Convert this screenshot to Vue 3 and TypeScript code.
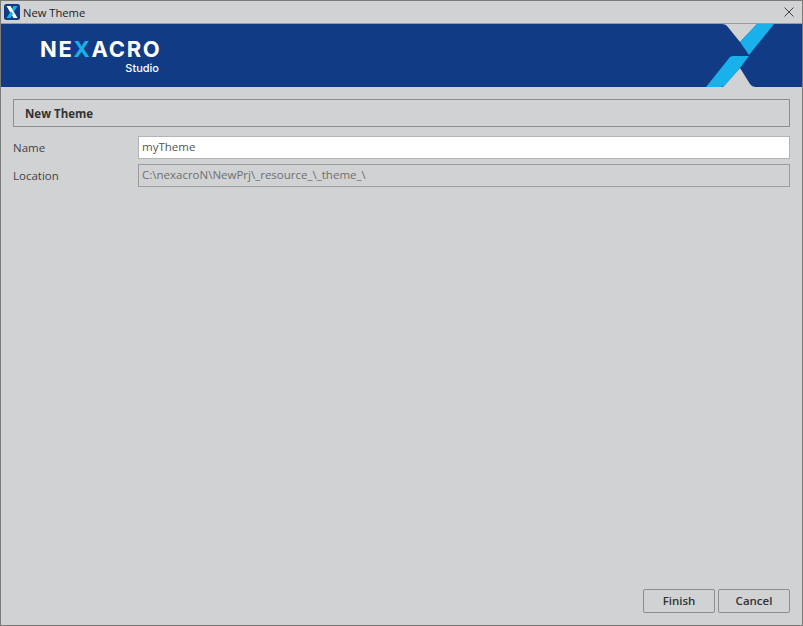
<script setup lang="ts">
const title: string = 'New Theme'
const name: string = 'myTheme'
const location: string = 'C:\\nexacroN\\NewPrj\\_resource_\\_theme_\\'
</script>

<template>
  <div class="window">
    <div class="titlebar">
      <svg class="app-icon" width="16" height="16" viewBox="0 0 16 16">
        <rect width="16" height="16" rx="2.5" fill="#123b85" />
        <path d="M2.500 2h4l7 12h-4z" fill="#fff" />
        <path d="M9.500 2H13.500L10 7.500 8 4.500z" fill="#19b1ec" />
        <path d="M2.500 14h4L9 10 7 7z" fill="#19b1ec" />
      </svg>
      <span class="title">{{ title }}</span>
      <svg class="close" width="10" height="10" viewBox="0 0 10 10">
        <path d="M.5.5l9 9M9.5.5l-9 9" stroke="#444" stroke-width="1" fill="none" />
      </svg>
    </div>
    <div class="banner">
      <div class="logo">
        <div class="wordmark">NE<span class="x">X</span>ACRO</div>
        <div class="studio">Studio</div>
      </div>
      <svg class="mark" width="803" height="63" viewBox="0 0 803 63">
        <path d="M722 0h35l-17 18-13-16q-1.500-2-5-2z" fill="#d0d2d4" />
        <path d="M740 44l-17 19h32q-3 0-5-3z" fill="#d0d2d4" />
        <path d="M757 0h17l-25 31-9-13z" fill="#19b1ec" />
        <path d="M706 63l24-30q2-1 3-1h16l-9 12-14 16q-2 3-5 3z" fill="#19b1ec" />
      </svg>
    </div>
    <main class="content">
      <div class="section">New Theme</div>
      <div class="form">
        <label class="label">Name</label>
        <div class="field editable">{{ name }}</div>
        <label class="label">Location</label>
        <div class="field disabled">{{ location }}</div>
      </div>
    </main>
    <footer class="footer">
      <button class="btn">Finish</button>
      <button class="btn">Cancel</button>
    </footer>
  </div>
</template>

<style>
html, body { margin: 0; padding: 0; background: #d0d2d4; }
</style>

<style scoped>
.window {
  box-sizing: border-box;
  width: 803px;
  height: 626px;
  display: flex;
  flex-direction: column;
  background: #d0d2d4;
  border: 1px solid #7a7a7a;
  font-family: "Open Sans", "Noto Sans", sans-serif;
  font-size: 11.500px;
  color: #333;
}
.titlebar {
  flex: none;
  height: 22px;
  display: flex;
  align-items: center;
  padding: 0 8px 0 3px;
  border-bottom: 1px solid #9a9a9a;
  color: #222;
}
.app-icon { flex: none; }
.title { margin-left: 3px; font-size: 11.200px; }
.close { margin-left: auto; }
.banner {
  flex: none;
  position: relative;
  height: 63px;
  background: #123b85;
  overflow: hidden;
}
.logo {
  padding: 12px 0 0 39px;
  width: 120px;
  color: #fff;
  font-family: Inter, "Open Sans", sans-serif;
}
.wordmark {
  font-size: 22px;
  font-weight: 700;
  line-height: 26px;
  letter-spacing: 1.700px;
  white-space: nowrap;
}
.x { color: #19b1ec; }
.studio {
  text-align: right;
  font-size: 11px;
  font-weight: 500;
  line-height: 13px;
  margin-right: 1px;
}
.mark { position: absolute; left: -1px; top: 0; }
.content {
  flex: 1;
  padding: 12px 12px 0;
}
.section {
  box-sizing: border-box;
  height: 28px;
  line-height: 27px;
  padding-left: 11px;
  border: 1px solid #8e8e8e;
  font-weight: 700;
  color: #333;
}
.form {
  display: grid;
  grid-template-columns: 125px 1fr;
  grid-auto-rows: 23px;
  row-gap: 5px;
  margin-top: 9px;
  align-items: center;
}
.label { color: #444; }
.field {
  box-sizing: border-box;
  height: 23px;
  line-height: 20px;
  padding-left: 3px;
  border: 1px solid #a0a0a0;
}
.editable { background: #fff; border-color: #b4b4b4; color: #555; }
.disabled { color: #6f6f6f; border-color: #9c9c9c; }
.footer {
  flex: none;
  display: flex;
  justify-content: flex-end;
  gap: 3px;
  padding: 0 12px 12px;
}
.btn {
  box-sizing: border-box;
  width: 72px;
  height: 24px;
  padding: 0 0 2px;
  background: #d0d2d4;
  border: 1px solid #8e8e8e;
  border-radius: 2px;
  font-family: inherit;
  font-size: 11.500px;
  font-weight: 600;
  color: #333;
}
</style>
